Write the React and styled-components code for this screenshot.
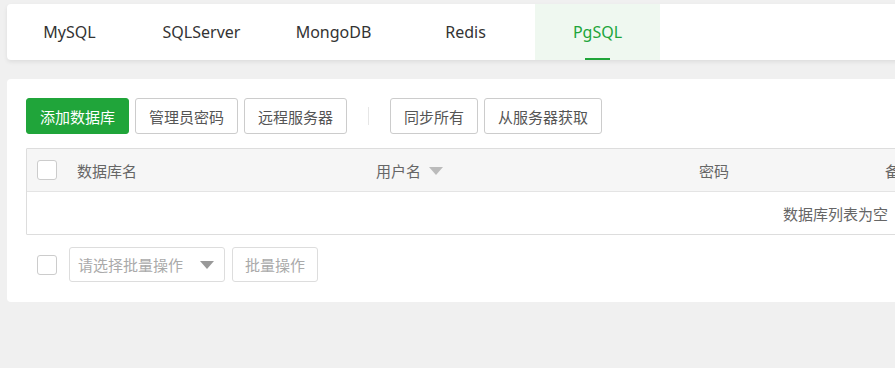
import React from 'react';
import styled, { createGlobalStyle } from 'styled-components';

const GlobalStyle = createGlobalStyle`
    html, body {
        margin: 0;
        padding: 0;
        overflow: hidden;
        background: #f0f0f0;
    }
    body {
        font-family: "Noto Sans", "Noto Sans CJK SC", sans-serif;
        font-size: 15px;
        color: #333;
    }
    * {
        box-sizing: border-box;
    }
`;

const Page = styled.div`
    display: flex;
    flex-direction: column;
    gap: 19px;
    width: 1664px;
    padding: 4px 0 0 7px;
    min-height: 368px;
`;

const TabCard = styled.nav`
    display: flex;
    gap: 7px;
    height: 56px;
    background: #fff;
    border-radius: 4px;
    box-shadow: 0 2px 4px rgba(0, 0, 0, .08);
    overflow: hidden;
`;

const Tab = styled.div`
    position: relative;
    width: 125px;
    display: flex;
    align-items: center;
    justify-content: center;
    font-size: 16px;
    color: ${p => p.$active ? '#20a53a' : '#333'};
    background: ${p => p.$active ? '#eff8f0' : 'transparent'};
    cursor: pointer;

    &::after {
        content: '';
        display: ${p => p.$active ? 'block' : 'none'};
        position: absolute;
        left: 50%;
        bottom: 0;
        width: 25px;
        height: 2px;
        margin-left: -13px;
        background: #20a53a;
    }
`;

const MainCard = styled.section`
    display: flex;
    flex-direction: column;
    background: #fff;
    border-radius: 4px;
    padding: 19px 19px 20px 19px;
`;

const Toolbar = styled.div`
    display: flex;
    align-items: center;
    gap: 6px;
    margin-bottom: 14px;
`;

const Button = styled.button`
    height: 36px;
    padding: 0 13px;
    font-family: inherit;
    font-size: 15px;
    border-radius: 3px;
    cursor: pointer;
    border: 1px solid ${p => p.$primary ? '#20a53a' : '#ccc'};
    background: ${p => p.$primary ? '#20a53a' : '#fff'};
    color: ${p => p.$primary ? '#fff' : '#555'};
`;

const Separator = styled.span`
    width: 1px;
    height: 18px;
    background: #e6e6e6;
    margin: 0 15px;
`;

const Table = styled.div`
    border: 1px solid #ddd;
    border-radius: 1px;
`;

const HeadRow = styled.div`
    display: grid;
    grid-template-columns: 40px 299px 323px 186px 1fr;
    align-items: center;
    height: 43px;
    background: #f6f6f6;
    border-bottom: 1px solid #e4e4e4;
    color: #666;
`;

const HeadCell = styled.div`
    display: flex;
    align-items: center;
    gap: 8px;
    padding-left: 10px;
`;

const Checkbox = styled.span`
    display: inline-block;
    width: 20px;
    height: 20px;
    border: 1px solid #ccc;
    border-radius: 3px;
    background: #fff;
`;

const SortArrow = styled.span`
    width: 0;
    height: 0;
    border-left: 7px solid transparent;
    border-right: 7px solid transparent;
    border-top: 8px solid #bbb;
    margin-top: 2px;
`;

const EmptyRow = styled.div`
    height: 42px;
    display: flex;
    align-items: center;
    justify-content: center;
    color: #666;
`;

const Footer = styled.div`
    display: flex;
    align-items: center;
    gap: 7px;
    margin-top: 12px;
    padding-left: 11px;
`;

const FooterCheck = styled(Checkbox)`
    margin-right: 5px;
`;

const Select = styled.div`
    width: 156px;
    height: 35px;
    display: flex;
    align-items: center;
    justify-content: space-between;
    padding: 0 10px 0 8px;
    border: 1px solid #ddd;
    border-radius: 3px;
    color: #aaa;
`;

const SelectArrow = styled.span`
    width: 0;
    height: 0;
    border-left: 7px solid transparent;
    border-right: 7px solid transparent;
    border-top: 8px solid #999;
`;

const DisabledButton = styled.button`
    height: 35px;
    padding: 0 12px;
    font-family: inherit;
    font-size: 15px;
    border: 1px solid #ddd;
    border-radius: 3px;
    background: #fff;
    color: #aaa;
`;

const tabs = ['MySQL', 'SQLServer', 'MongoDB', 'Redis', 'PgSQL'];

export default function App() {
    return (
        <>
            <GlobalStyle />
            <Page>
                <TabCard>
                    {tabs.map(t => (
                        <Tab key={t} $active={t === 'PgSQL'}>{t}</Tab>
                    ))}
                </TabCard>
                <MainCard>
                    <Toolbar>
                        <Button $primary>添加数据库</Button>
                        <Button>管理员密码</Button>
                        <Button>远程服务器</Button>
                        <Separator />
                        <Button>同步所有</Button>
                        <Button>从服务器获取</Button>
                    </Toolbar>
                    <Table>
                        <HeadRow>
                            <HeadCell><Checkbox /></HeadCell>
                            <HeadCell>数据库名</HeadCell>
                            <HeadCell>用户名<SortArrow /></HeadCell>
                            <HeadCell>密码</HeadCell>
                            <HeadCell>备注</HeadCell>
                        </HeadRow>
                        <EmptyRow>数据库列表为空</EmptyRow>
                    </Table>
                    <Footer>
                        <FooterCheck />
                        <Select>
                            <span>请选择批量操作</span>
                            <SelectArrow />
                        </Select>
                        <DisabledButton>批量操作</DisabledButton>
                    </Footer>
                </MainCard>
            </Page>
        </>
    );
}
